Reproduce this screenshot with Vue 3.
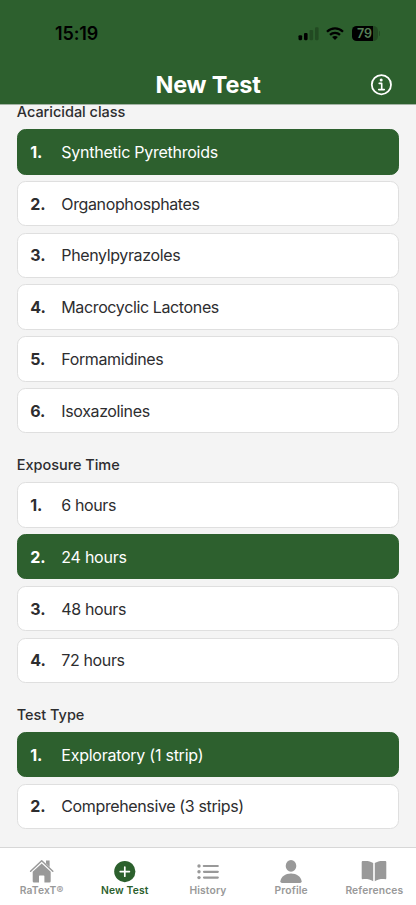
<script setup>
const sections = [
  {
    title: 'Acaricidal class',
    selected: 0,
    options: [
      'Synthetic Pyrethroids',
      'Organophosphates',
      'Phenylpyrazoles',
      'Macrocyclic Lactones',
      'Formamidines',
      'Isoxazolines',
    ],
  },
  { title: 'Exposure Time', selected: 1, options: ['6 hours', '24 hours', '48 hours', '72 hours'] },
  { title: 'Test Type', selected: 0, options: ['Exploratory (1 strip)', 'Comprehensive (3 strips)'] },
]
</script>

<template>
  <div class="screen">
    <header class="header">
      <div class="status">
        <span class="time">15:19</span>
        <div class="indicators">
          <svg class="signal" width="21" height="14" viewBox="0 0 21 14">
            <rect x="0.5" y="8.2" width="3.6" height="5" rx="1.1" fill="#000" />
            <rect x="6" y="6" width="3.6" height="7.2" rx="1.1" fill="#000" />
            <rect x="11.5" y="3" width="3.6" height="10.2" rx="1.1" fill="#224a22" />
            <rect x="17" y="0.3" width="3.6" height="12.9" rx="1.1" fill="#224a22" />
          </svg>
          <svg class="wifi" width="18" height="13" viewBox="0 0 18 13">
            <g fill="none" stroke="#000" stroke-width="2.3">
              <path d="M1 4.7C5.6.2 12.4.2 17 4.7" />
              <path d="M4 7.9C6.9 5.1 11.1 5.1 14 7.9" />
            </g>
            <path d="M9 13 6.1 10.1C7.8 8.6 10.2 8.6 11.9 10.1Z" fill="#000" />
          </svg>
          <div class="battery"><span>79</span></div>
          <i class="battery-tip"></i>
        </div>
      </div>
      <div class="titlebar">
        <h1>New Test</h1>
        <svg class="info" width="22" height="22" viewBox="0 0 22 22" fill="none" stroke="#fff">
          <circle cx="11.4" cy="10.7" r="9.6" stroke-width="1.8" />
          <circle cx="11.2" cy="5.9" r="1.5" fill="#fff" stroke="none" />
          <path d="M9.2 9.4H11.7V15.4M8.7 15.6H14.3" stroke-width="1.6" stroke-linecap="round" stroke-linejoin="round" />
        </svg>
      </div>
    </header>

    <main class="content">
      <section v-for="section in sections" :key="section.title">
        <h2>{{ section.title }}</h2>
        <ol>
          <li v-for="(option, i) in section.options" :key="option" :class="{ selected: i === section.selected }">
            <b>{{ i + 1 }}.</b>
            <span>{{ option }}</span>
          </li>
        </ol>
      </section>
    </main>

    <nav class="tabs">
      <div class="tab">
        <svg width="26" height="24" viewBox="0 0 26 24">
          <path d="M17 3.2V1.6H20.6V8L17 4.6Z" fill="#999" />
          <path d="M1.6 12.2 12.7 1.8 23.8 12.2" fill="none" stroke="#999" stroke-width="1.5" stroke-linecap="round" stroke-linejoin="round" />
          <path d="M12.7 4.4 21.7 12.8V22.3Q21.7 23.6 20.4 23.6H15.4V17.3Q15.4 16.6 14.7 16.6H10.7Q10 16.6 10 17.3V23.6H5Q3.7 23.6 3.7 22.3V12.8Z" fill="#999" />
        </svg>
        <span class="brand">RaTexT®</span>
      </div>
      <div class="tab active">
        <svg width="22" height="24" viewBox="0 0 22 24">
          <circle cx="10.8" cy="12.6" r="10.6" fill="#2c602d" />
          <path d="M10.8 8V17.2M6.2 12.6H15.4" fill="none" stroke="#fff" stroke-width="1.7" stroke-linecap="round" />
        </svg>
        <span>New Test</span>
      </div>
      <div class="tab">
        <svg width="22" height="24" viewBox="0 0 22 24" stroke="#999" stroke-width="2.2" stroke-linecap="round" fill="#999">
          <path d="M6.8 7H20.8M7 12.8H20.8M7 18.6H20.8" />
          <g stroke="none">
            <circle cx="2" cy="7" r="1.7" />
            <circle cx="2" cy="12.8" r="1.7" />
            <circle cx="2" cy="18.6" r="1.7" />
          </g>
        </svg>
        <span>History</span>
      </div>
      <div class="tab">
        <svg width="22" height="24" viewBox="0 0 22 24" fill="#999">
          <ellipse cx="11" cy="6.9" rx="5.3" ry="5.9" />
          <path d="M2 24Q.3 24 .4 22.3C.8 17.6 5.5 14.4 11 14.4S21.2 17.6 21.6 22.3Q21.7 24 20 24Z" />
        </svg>
        <span>Profile</span>
      </div>
      <div class="tab">
        <svg width="26" height="24" viewBox="0 0 26 24" fill="#999">
          <path d="M12.2 4.1V22.3C9.2 20.3 5.5 19.9 1.7 20.2Q.7 20.2.7 19.2V3.2Q.7 2.2 1.7 2.1C6 1.7 9.5 2.1 12.2 4.1Z" />
          <path d="M13.8 4.1V22.3C16.8 20.3 20.5 19.9 24.3 20.2Q25.3 20.2 25.3 19.2V3.2Q25.3 2.2 24.3 2.1C20 1.7 16.5 2.1 13.8 4.1Z" />
        </svg>
        <span>References</span>
      </div>
    </nav>
  </div>
</template>

<style>
body {
  margin: 0;
}
</style>

<style scoped>
.screen {
  width: 416px;
  height: 905px;
  display: flex;
  flex-direction: column;
  overflow: hidden;
  background: #f4f4f4;
  color: #2d2d2f;
  font-family: Inter, 'Liberation Sans', sans-serif;
}
.header {
  box-sizing: border-box;
  height: 105px;
  flex: none;
  background: #2d602e;
  border-bottom: 1px solid #a3b3a4;
}
.status {
  box-sizing: border-box;
  height: 65px;
  padding: 22px 36px 0 55px;
  display: flex;
  justify-content: space-between;
  align-items: flex-start;
  color: #000;
}
.time {
  font-size: 18px;
  line-height: 24px;
  font-weight: 600;
  letter-spacing: -0.15px;
}
.indicators {
  display: flex;
  align-items: center;
  height: 23px;
}
.wifi {
  margin: 0 8px 0 7px;
}
.battery {
  box-sizing: border-box;
  width: 26px;
  height: 15px;
  border-radius: 4.6px;
  background: linear-gradient(90deg, #000 80%, #234a23 80%);
  color: #568057;
  font-size: 12.5px;
  font-weight: 600;
  line-height: 15px;
  text-align: center;
}
.battery-tip {
  width: 1.5px;
  height: 5px;
  margin-left: 1px;
  border-radius: 0 2px 2px 0;
  background: #234a23;
}
.titlebar {
  height: 39px;
  padding: 0 24px;
  display: grid;
  grid-template-columns: 22px 1fr 22px;
  align-items: center;
}
h1 {
  grid-column: 2;
  margin: 0;
  color: #fff;
  text-align: center;
  font-size: 23.5px;
  line-height: 30px;
  font-weight: 700;
  letter-spacing: -0.2px;
}
.content {
  flex: 1;
  min-height: 0;
  padding: 0 17px 0 16.6px;
}
section + section {
  margin-top: 22px;
}
h2 {
  margin: 0;
  height: 24.2px;
  box-sizing: border-box;
  padding-left: 0.2px;
  font-size: 14.5px;
  line-height: 14px;
  font-weight: 500;
  letter-spacing: -0.03px;
}
section + section h2 {
  height: 27.1px;
  line-height: 19px;
}
ol {
  list-style: none;
  margin: 0;
  padding: 0;
  display: grid;
  gap: 6.35px;
}
li {
  box-sizing: border-box;
  height: 45.4px;
  display: flex;
  align-items: center;
  padding-left: 12.7px;
  border: 1px solid #dfdfdf;
  border-radius: 8.5px;
  background: #fff;
  font-size: 16px;
  letter-spacing: -0.37px;
}
li b {
  width: 31px;
  font-weight: 650;
  letter-spacing: -0.1px;
}
li span {
  font-weight: 430;
}
li.selected {
  background: #2d602e;
  border-color: #2d602e;
  color: #fff;
  letter-spacing: -0.25px;
}
.tabs {
  box-sizing: border-box;
  height: 58px;
  flex: none;
  display: grid;
  grid-template-columns: repeat(5, 1fr);
  padding-top: 11px;
  background: #fff;
  border-top: 1px solid #d7d7d7;
}
.tab {
  display: flex;
  flex-direction: column;
  align-items: center;
  color: #999;
  font-size: 10.3px;
  font-weight: 600;
  line-height: 14px;
  letter-spacing: 0.15px;
}
.tab.active {
  color: #2c602d;
}
</style>
